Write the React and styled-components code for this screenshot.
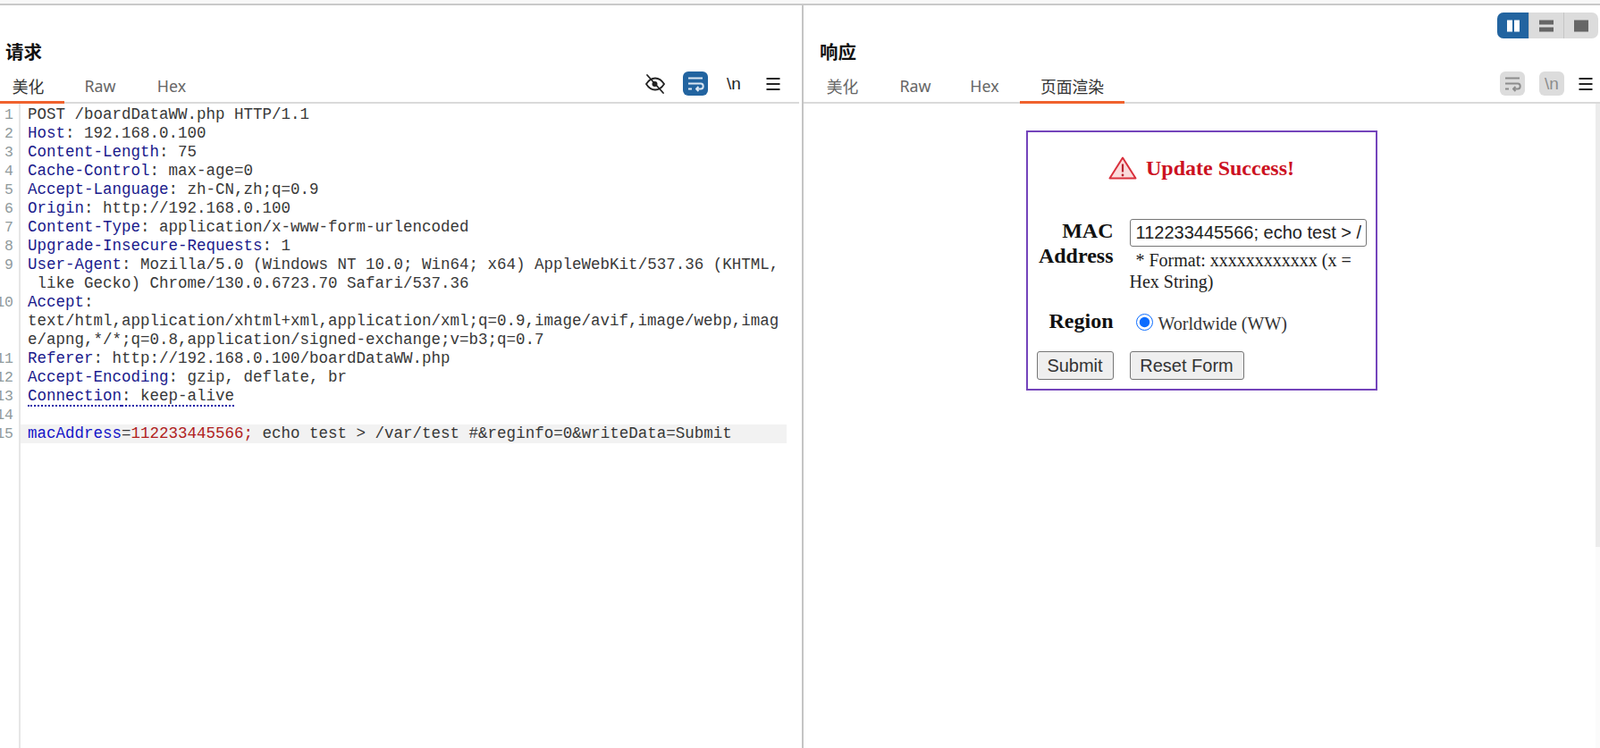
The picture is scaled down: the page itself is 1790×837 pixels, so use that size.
import styled, { createGlobalStyle } from "styled-components";

const GlobalStyle = createGlobalStyle`
  html, body {
    margin: 0;
    padding: 0;
    background: #fff;
  }
  body {
    font-family: "Liberation Sans", "Noto Sans CJK SC", sans-serif;
  }
`;

const Page = styled.div`
  width: 1790px;
  height: 837px;
  overflow: hidden;
  display: flex;
  flex-direction: column;
`;

const TopBar = styled.div`
  height: 4px;
  background: #f8f8f8;
  border-bottom: 2px solid #c9c9c9;
  flex: none;
`;

const Panels = styled.div`
  flex: 1;
  display: grid;
  grid-template-columns: 897px 2px 1fr;
  min-height: 0;
`;

const Divider = styled.div`
  background: #c4c4c4;
`;

const Panel = styled.section`
  display: flex;
  flex-direction: column;
  min-width: 0;
  min-height: 0;
`;

const PanelHeader = styled.div`
  height: 64px;
  flex: none;
  display: flex;
  justify-content: space-between;
  padding-left: ${(p) => p.$inset}px;
`;

const PanelTitle = styled.h2`
  margin: 0;
  align-self: flex-end;
  font: 700 20.5px/25px "Noto Sans CJK SC", sans-serif;
  color: #111;
`;

const LayoutToggle = styled.div`
  display: flex;
  height: 29px;
  margin: 8px 2px 0 0;
  border-radius: 7px;
  overflow: hidden;
  background: #dcdcdc;
`;

const ToggleSegment = styled.div`
  width: ${(p) => p.$width}px;
  display: flex;
  align-items: center;
  justify-content: center;
  background: ${(p) => (p.$active ? "#2264a0" : "transparent")};
  color: ${(p) => (p.$active ? "#fff" : "#666")};
  & + & {
    border-left: 1px solid #c6c6c6;
  }
`;

const TabBar = styled.div`
  height: 46px;
  flex: none;
  display: flex;
  align-items: stretch;
  margin-right: ${(p) => p.$gap}px;
  border-bottom: 2px solid #dadada;
  box-sizing: border-box;
`;

const Tab = styled.div`
  width: ${(p) => p.$width}px;
  margin-bottom: -2px;
  padding: 9px ${(p) => p.$shift || 0}px 0 0;
  display: flex;
  align-items: center;
  justify-content: center;
  box-sizing: border-box;
  font: 17.8px "Noto Sans", "Noto Sans CJK SC", sans-serif;
  color: ${(p) => (p.$active ? "#333" : "#666")};
  border-bottom: 3px solid ${(p) => (p.$active ? "#f0622d" : "transparent")};
`;

const TabTools = styled.div`
  margin-left: auto;
  display: flex;
  align-items: center;
  padding-top: 3px;
`;

const ToolSlot = styled.div`
  width: ${(p) => p.$width}px;
  display: flex;
  justify-content: center;
`;

const ToolButton = styled.div`
  width: 28px;
  height: 27px;
  border-radius: 6px;
  display: flex;
  align-items: center;
  justify-content: center;
  font: 19px "Liberation Sans", sans-serif;
  background: ${(p) => (p.$on ? "#2264a0" : p.$disabled ? "#dcdcdc" : "transparent")};
  color: ${(p) => (p.$on ? "#dbe7f3" : p.$disabled ? "#8c8c8c" : "#222")};
`;

const Editor = styled.div`
  flex: 1;
  display: flex;
  min-height: 0;
  overflow: hidden;
`;

const Gutter = styled.div`
  width: 21px;
  flex: none;
  border-right: 2px solid #e6e6e6;
  overflow: hidden;
  padding-top: 2px;
  direction: rtl;
`;

const LineNo = styled.div`
  height: ${(p) => p.$rows * 21}px;
  padding-right: 6px;
  font: 16.5px/21px "Liberation Mono", monospace;
  color: #8f9a9c;
  text-align: right;
`;

const Code = styled.div`
  flex: 1;
  padding-top: 2px;
  min-width: 0;
`;

const Row = styled.div`
  height: 21px;
  width: 857px;
  padding-left: 8px;
  box-sizing: border-box;
  font: 17.5px/21px "Liberation Mono", monospace;
  color: #383838;
  white-space: pre;
  background: ${(p) => (p.$highlight ? "#f2f2f2" : "transparent")};
`;

const HeaderName = styled.span`
  color: #1a1a8c;
`;

const DottedName = styled(HeaderName)`
  border-bottom: 2px dotted #1a1aa8;
`;

const DottedValue = styled.span`
  border-bottom: 2px dotted #1a1aa8;
`;

const ParamName = styled.span`
  color: #1414c8;
`;

const ParamValue = styled.span`
  color: #b02020;
`;

const Preview = styled.div`
  flex: 1;
  position: relative;
  padding: 30px 1px 0 0;
  display: flex;
  justify-content: center;
`;

const ScrollTrack = styled.div`
  position: absolute;
  top: 0;
  right: 0;
  bottom: 0;
  width: 5px;
  background: #fbfbfb;
`;

const ScrollThumb = styled.div`
  height: 496px;
  background: #ececec;
`;

const FormCard = styled.div`
  width: 393px;
  height: 291px;
  box-sizing: border-box;
  border: 2px solid #7444bb;
  padding: 0 10px;
  font-family: "Liberation Serif", serif;
`;

const Banner = styled.div`
  height: 70px;
  padding-top: 10px;
  box-sizing: border-box;
  display: flex;
  align-items: center;
  justify-content: center;
  gap: 10px;
  font-size: 24px;
  font-weight: 700;
  color: #cc1122;
`;

const FormGrid = styled.div`
  margin-top: 27px;
  display: grid;
  grid-template-columns: 86px 265px;
  column-gap: 18px;
`;

const FieldLabel = styled.div`
  margin-top: -1px;
  text-align: right;
  font-size: 24px;
  font-weight: 700;
  line-height: 28px;
  color: #111;
`;

const AddressInput = styled.input`
  display: block;
  width: 100%;
  height: 31px;
  box-sizing: border-box;
  padding: 0 5px 0 6px;
  border: 1.5px solid #767676;
  border-radius: 3px;
  font: 20px "Liberation Sans", sans-serif;
  color: #222;
`;

const Hint = styled.div`
  margin-top: 3px;
  font-size: 20px;
  line-height: 24px;
  color: #222;
  text-indent: 7px;
`;

const RegionLabel = styled(FieldLabel)`
  margin-top: 18px;
`;

const RegionValue = styled.label`
  margin-top: 18px;
  padding-left: 7px;
  display: flex;
  align-items: center;
  gap: 6px;
  height: 30px;
  font-size: 20px;
  color: #333;
`;

const RegionRadio = styled.input`
  margin: 0;
  width: 19px;
  height: 19px;
  accent-color: #0a6cff;
`;

const RegionText = styled.span`
  padding-top: 5px;
`;

const FormButton = styled.button`
  margin-top: 18px;
  height: 32px;
  width: ${(p) => p.$width}px;
  box-sizing: border-box;
  padding: 0;
  border: 1.5px solid #767676;
  border-radius: 3px;
  background: #efefef;
  font: 20px "Liberation Sans", sans-serif;
  color: #333;
`;

const requestLines = [
  { rows: [[["", "POST /boardDataWW.php HTTP/1.1"]]] },
  { rows: [[["h", "Host"], ["", ": 192.168.0.100"]]] },
  { rows: [[["h", "Content-Length"], ["", ": 75"]]] },
  { rows: [[["h", "Cache-Control"], ["", ": max-age=0"]]] },
  { rows: [[["h", "Accept-Language"], ["", ": zh-CN,zh;q=0.9"]]] },
  { rows: [[["h", "Origin"], ["", ": http://192.168.0.100"]]] },
  { rows: [[["h", "Content-Type"], ["", ": application/x-www-form-urlencoded"]]] },
  { rows: [[["h", "Upgrade-Insecure-Requests"], ["", ": 1"]]] },
  {
    rows: [
      [["h", "User-Agent"], ["", ": Mozilla/5.0 (Windows NT 10.0; Win64; x64) AppleWebKit/537.36 (KHTML,"]],
      [["", " like Gecko) Chrome/130.0.6723.70 Safari/537.36"]],
    ],
  },
  {
    rows: [
      [["h", "Accept"], ["", ":"]],
      [["", "text/html,application/xhtml+xml,application/xml;q=0.9,image/avif,image/webp,imag"]],
      [["", "e/apng,*/*;q=0.8,application/signed-exchange;v=b3;q=0.7"]],
    ],
  },
  { rows: [[["h", "Referer"], ["", ": http://192.168.0.100/boardDataWW.php"]]] },
  { rows: [[["h", "Accept-Encoding"], ["", ": gzip, deflate, br"]]] },
  { rows: [[["d", "Connection"], ["dv", ": keep-alive"]]] },
  { rows: [[["", " "]]] },
  {
    highlight: true,
    rows: [[["p", "macAddress"], ["", "="], ["v", "112233445566;"], ["", " echo test > /var/test #&reginfo=0&writeData=Submit"]]],
  },
];

const tokenParts = { h: HeaderName, d: DottedName, dv: DottedValue, p: ParamName, v: ParamValue };

function Token({ kind, text }) {
  const Part = tokenParts[kind];
  return Part ? <Part>{text}</Part> : text;
}

function EyeOffIcon() {
  return (
    <svg width="24" height="24" viewBox="0 0 24 24" fill="none" stroke="#222" strokeWidth="1.8" strokeLinecap="round">
      <path d="M2 12c2.500-4 5.800-6.500 10-6.500s7.500 2.500 10 6.500c-2.500 4-5.800 6.500-10 6.500s-7.500-2.500-10-6.500z" />
      <circle cx="11.500" cy="12" r="3" fill="#222" stroke="none" />
      <path d="M3 2l18 20" />
    </svg>
  );
}

function WrapIcon() {
  return (
    <svg width="22" height="20" viewBox="0 0 22 20" fill="none" stroke="currentColor" strokeWidth="2" strokeLinejoin="round">
      <path d="M3 3.500h16" />
      <path d="M3 9.500h14c3.600 0 3.600 6 0 6h-5" />
      <path d="M14.500 13L12 15.500l2.500 2.500" />
      <path d="M3 15.500h4" />
    </svg>
  );
}

function MenuIcon() {
  return (
    <svg width="18" height="16" viewBox="0 0 18 16" stroke="#222" strokeWidth="2">
      <path d="M1.500 2h15M1.500 8h15M1.500 14h15" />
    </svg>
  );
}

function SplitIcon({ kind }) {
  if (kind === "columns") {
    return (
      <svg width="16" height="14" viewBox="0 0 16 14" fill="currentColor">
        <rect x="1" y="0.500" width="6" height="13" />
        <rect x="9" y="0.500" width="6" height="13" />
      </svg>
    );
  }
  if (kind === "rows") {
    return (
      <svg width="16" height="14" viewBox="0 0 16 14" fill="currentColor">
        <rect x="0" y="0.500" width="16" height="5" />
        <rect x="0" y="8.500" width="16" height="5" />
      </svg>
    );
  }
  return (
    <svg width="16" height="14" viewBox="0 0 16 14" fill="currentColor">
      <rect x="0" y="0.500" width="16" height="13" />
    </svg>
  );
}

function WarningIcon() {
  return (
    <svg width="32" height="26" viewBox="0 0 32 26" fill="none">
      <path d="M16 1.500L1.500 24.500h29z" fill="#fbdcdc" stroke="#d9303c" strokeWidth="2" strokeLinejoin="round" />
      <path d="M16 8.500v9" stroke="#b82430" strokeWidth="2.200" />
      <circle cx="16" cy="21" r="1.400" fill="#b82430" />
    </svg>
  );
}

function RequestPanel() {
  return (
    <Panel>
      <PanelHeader $inset={6}>
        <PanelTitle>请求</PanelTitle>
      </PanelHeader>
      <TabBar $gap={3}>
        <Tab $width={72} $shift={9} $active>美化</Tab>
        <Tab $width={80}>Raw</Tab>
        <Tab $width={80}>Hex</Tab>
        <TabTools>
          <ToolSlot $width={42}><EyeOffIcon /></ToolSlot>
          <ToolSlot $width={48}><ToolButton $on><WrapIcon /></ToolButton></ToolSlot>
          <ToolSlot $width={38}><ToolButton>\n</ToolButton></ToolSlot>
          <ToolSlot $width={50}><MenuIcon /></ToolSlot>
          <ToolSlot $width={4} />
        </TabTools>
      </TabBar>
      <Editor>
        <Gutter>
          {requestLines.map((line, i) => (
            <LineNo key={i} $rows={line.rows.length}>{i + 1}</LineNo>
          ))}
        </Gutter>
        <Code>
          {requestLines.map((line, i) =>
            line.rows.map((row, j) => (
              <Row key={`${i}-${j}`} $highlight={line.highlight}>
                {row.map(([kind, text], k) => (
                  <Token key={k} kind={kind} text={text} />
                ))}
              </Row>
            ))
          )}
        </Code>
      </Editor>
    </Panel>
  );
}

function ResponsePanel() {
  return (
    <Panel>
      <PanelHeader $inset={18}>
        <PanelTitle>响应</PanelTitle>
        <LayoutToggle>
          <ToggleSegment $width={35} $active><SplitIcon kind="columns" /></ToggleSegment>
          <ToggleSegment $width={38}><SplitIcon kind="rows" /></ToggleSegment>
          <ToggleSegment $width={38}><SplitIcon kind="single" /></ToggleSegment>
        </LayoutToggle>
      </PanelHeader>
      <TabBar $gap={0}>
        <Tab $width={87}>美化</Tab>
        <Tab $width={76}>Raw</Tab>
        <Tab $width={79}>Hex</Tab>
        <Tab $width={117} $active>页面渲染</Tab>
        <TabTools>
          <ToolSlot $width={44}><ToolButton $disabled><WrapIcon /></ToolButton></ToolSlot>
          <ToolSlot $width={44}><ToolButton $disabled>\n</ToolButton></ToolSlot>
          <ToolSlot $width={32}><MenuIcon /></ToolSlot>
        </TabTools>
      </TabBar>
      <Preview>
        <FormCard>
          <Banner>
            <WarningIcon />
            Update Success!
          </Banner>
          <FormGrid>
            <FieldLabel>MAC Address</FieldLabel>
            <div>
              <AddressInput readOnly value="112233445566; echo test > /var/test #" />
              <Hint>* Format: xxxxxxxxxxxx (x = Hex String)</Hint>
            </div>
            <RegionLabel>Region</RegionLabel>
            <RegionValue>
              <RegionRadio type="radio" readOnly checked />
              <RegionText>Worldwide (WW)</RegionText>
            </RegionValue>
            <FormButton $width={86}>Submit</FormButton>
            <FormButton $width={128}>Reset Form</FormButton>
          </FormGrid>
        </FormCard>
        <ScrollTrack>
          <ScrollThumb />
        </ScrollTrack>
      </Preview>
    </Panel>
  );
}

export default function App() {
  return (
    <Page>
      <GlobalStyle />
      <TopBar />
      <Panels>
        <RequestPanel />
        <Divider />
        <ResponsePanel />
      </Panels>
    </Page>
  );
}
